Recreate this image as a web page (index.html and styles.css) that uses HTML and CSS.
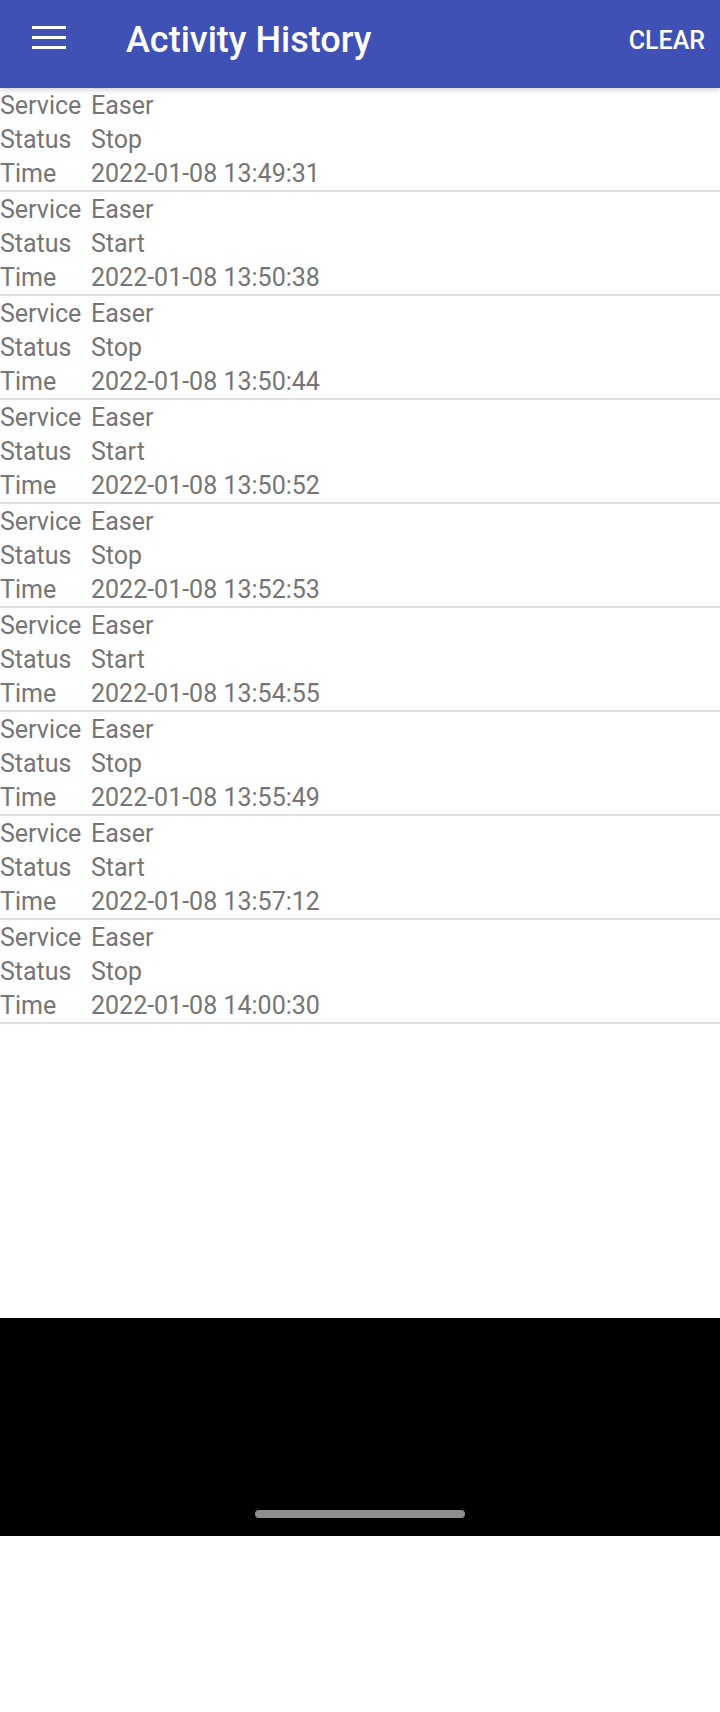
FILE: index.html
```html
<!DOCTYPE html>
<html>
<head>
<meta charset="utf-8">
<link rel="stylesheet" href="styles.css">
</head>
<body>
<div class="screen">
  <header class="toolbar">
    <div class="menu-btn">
      <svg width="34" height="24" viewBox="0 0 34 24">
        <rect x="0" y="0" width="34" height="3" fill="#fff"/>
        <rect x="0" y="10" width="34" height="3" fill="#fff"/>
        <rect x="0" y="20" width="34" height="3" fill="#fff"/>
      </svg>
    </div>
    <h1 class="title">Activity History</h1>
    <div class="action">CLEAR</div>
  </header>
  <main class="list">
    <div class="item"><span class="k">Service</span><span class="v">Easer</span><span class="k">Status</span><span class="v">Stop</span><span class="k">Time</span><span class="v">2022-01-08 13:49:31</span></div>
    <div class="item"><span class="k">Service</span><span class="v">Easer</span><span class="k">Status</span><span class="v">Start</span><span class="k">Time</span><span class="v">2022-01-08 13:50:38</span></div>
    <div class="item"><span class="k">Service</span><span class="v">Easer</span><span class="k">Status</span><span class="v">Stop</span><span class="k">Time</span><span class="v">2022-01-08 13:50:44</span></div>
    <div class="item"><span class="k">Service</span><span class="v">Easer</span><span class="k">Status</span><span class="v">Start</span><span class="k">Time</span><span class="v">2022-01-08 13:50:52</span></div>
    <div class="item"><span class="k">Service</span><span class="v">Easer</span><span class="k">Status</span><span class="v">Stop</span><span class="k">Time</span><span class="v">2022-01-08 13:52:53</span></div>
    <div class="item"><span class="k">Service</span><span class="v">Easer</span><span class="k">Status</span><span class="v">Start</span><span class="k">Time</span><span class="v">2022-01-08 13:54:55</span></div>
    <div class="item"><span class="k">Service</span><span class="v">Easer</span><span class="k">Status</span><span class="v">Stop</span><span class="k">Time</span><span class="v">2022-01-08 13:55:49</span></div>
    <div class="item"><span class="k">Service</span><span class="v">Easer</span><span class="k">Status</span><span class="v">Start</span><span class="k">Time</span><span class="v">2022-01-08 13:57:12</span></div>
    <div class="item"><span class="k">Service</span><span class="v">Easer</span><span class="k">Status</span><span class="v">Stop</span><span class="k">Time</span><span class="v">2022-01-08 14:00:30</span></div>
  </main>
</div>
<div class="navbar"><div class="handle"></div></div>
</body>
</html>
```
FILE: styles.css
```css
* { box-sizing: border-box; }
html, body { margin: 0; padding: 0; background: #fff; }
body { font-family: Roboto, "Liberation Sans", sans-serif; width: 720px; height: 1712px; overflow: hidden; }
.screen { height: 1318px; display: flex; flex-direction: column; background: #fff; }
.toolbar {
  height: 88px;
  background: #3f51b5;
  display: flex;
  align-items: center;
  padding: 0 15px 0 32px;
  box-shadow: 0 2px 5px rgba(0,0,0,0.18);
  position: relative;
  z-index: 1;
  flex: none;
}
.menu-btn { width: 34px; height: 24px; display: flex; margin-top: -12px; }
.title {
  margin: 0 0 0 60px;
  font-size: 36px;
  font-weight: 500;
  color: #fff;
  flex: 1;
  margin-top: -8px;
}
.action {
  font-size: 25px;
  font-weight: 500;
  color: #fff;
  margin-top: -7px;
}
.list { display: flex; flex-direction: column; }
.item {
  display: grid;
  grid-template-columns: 91px 1fr;
  font-size: 25px;
  line-height: 34px;
  padding-top: 1px;
  height: 104px;
  color: #757575;
  border-bottom: 2px solid #dedede;
}
.navbar {
  height: 218px;
  background: #000;
  display: flex;
  justify-content: center;
  align-items: flex-end;
  padding-bottom: 18px;
}
.handle { width: 210px; height: 8px; border-radius: 4px; background: #8e8e8e; }
```
